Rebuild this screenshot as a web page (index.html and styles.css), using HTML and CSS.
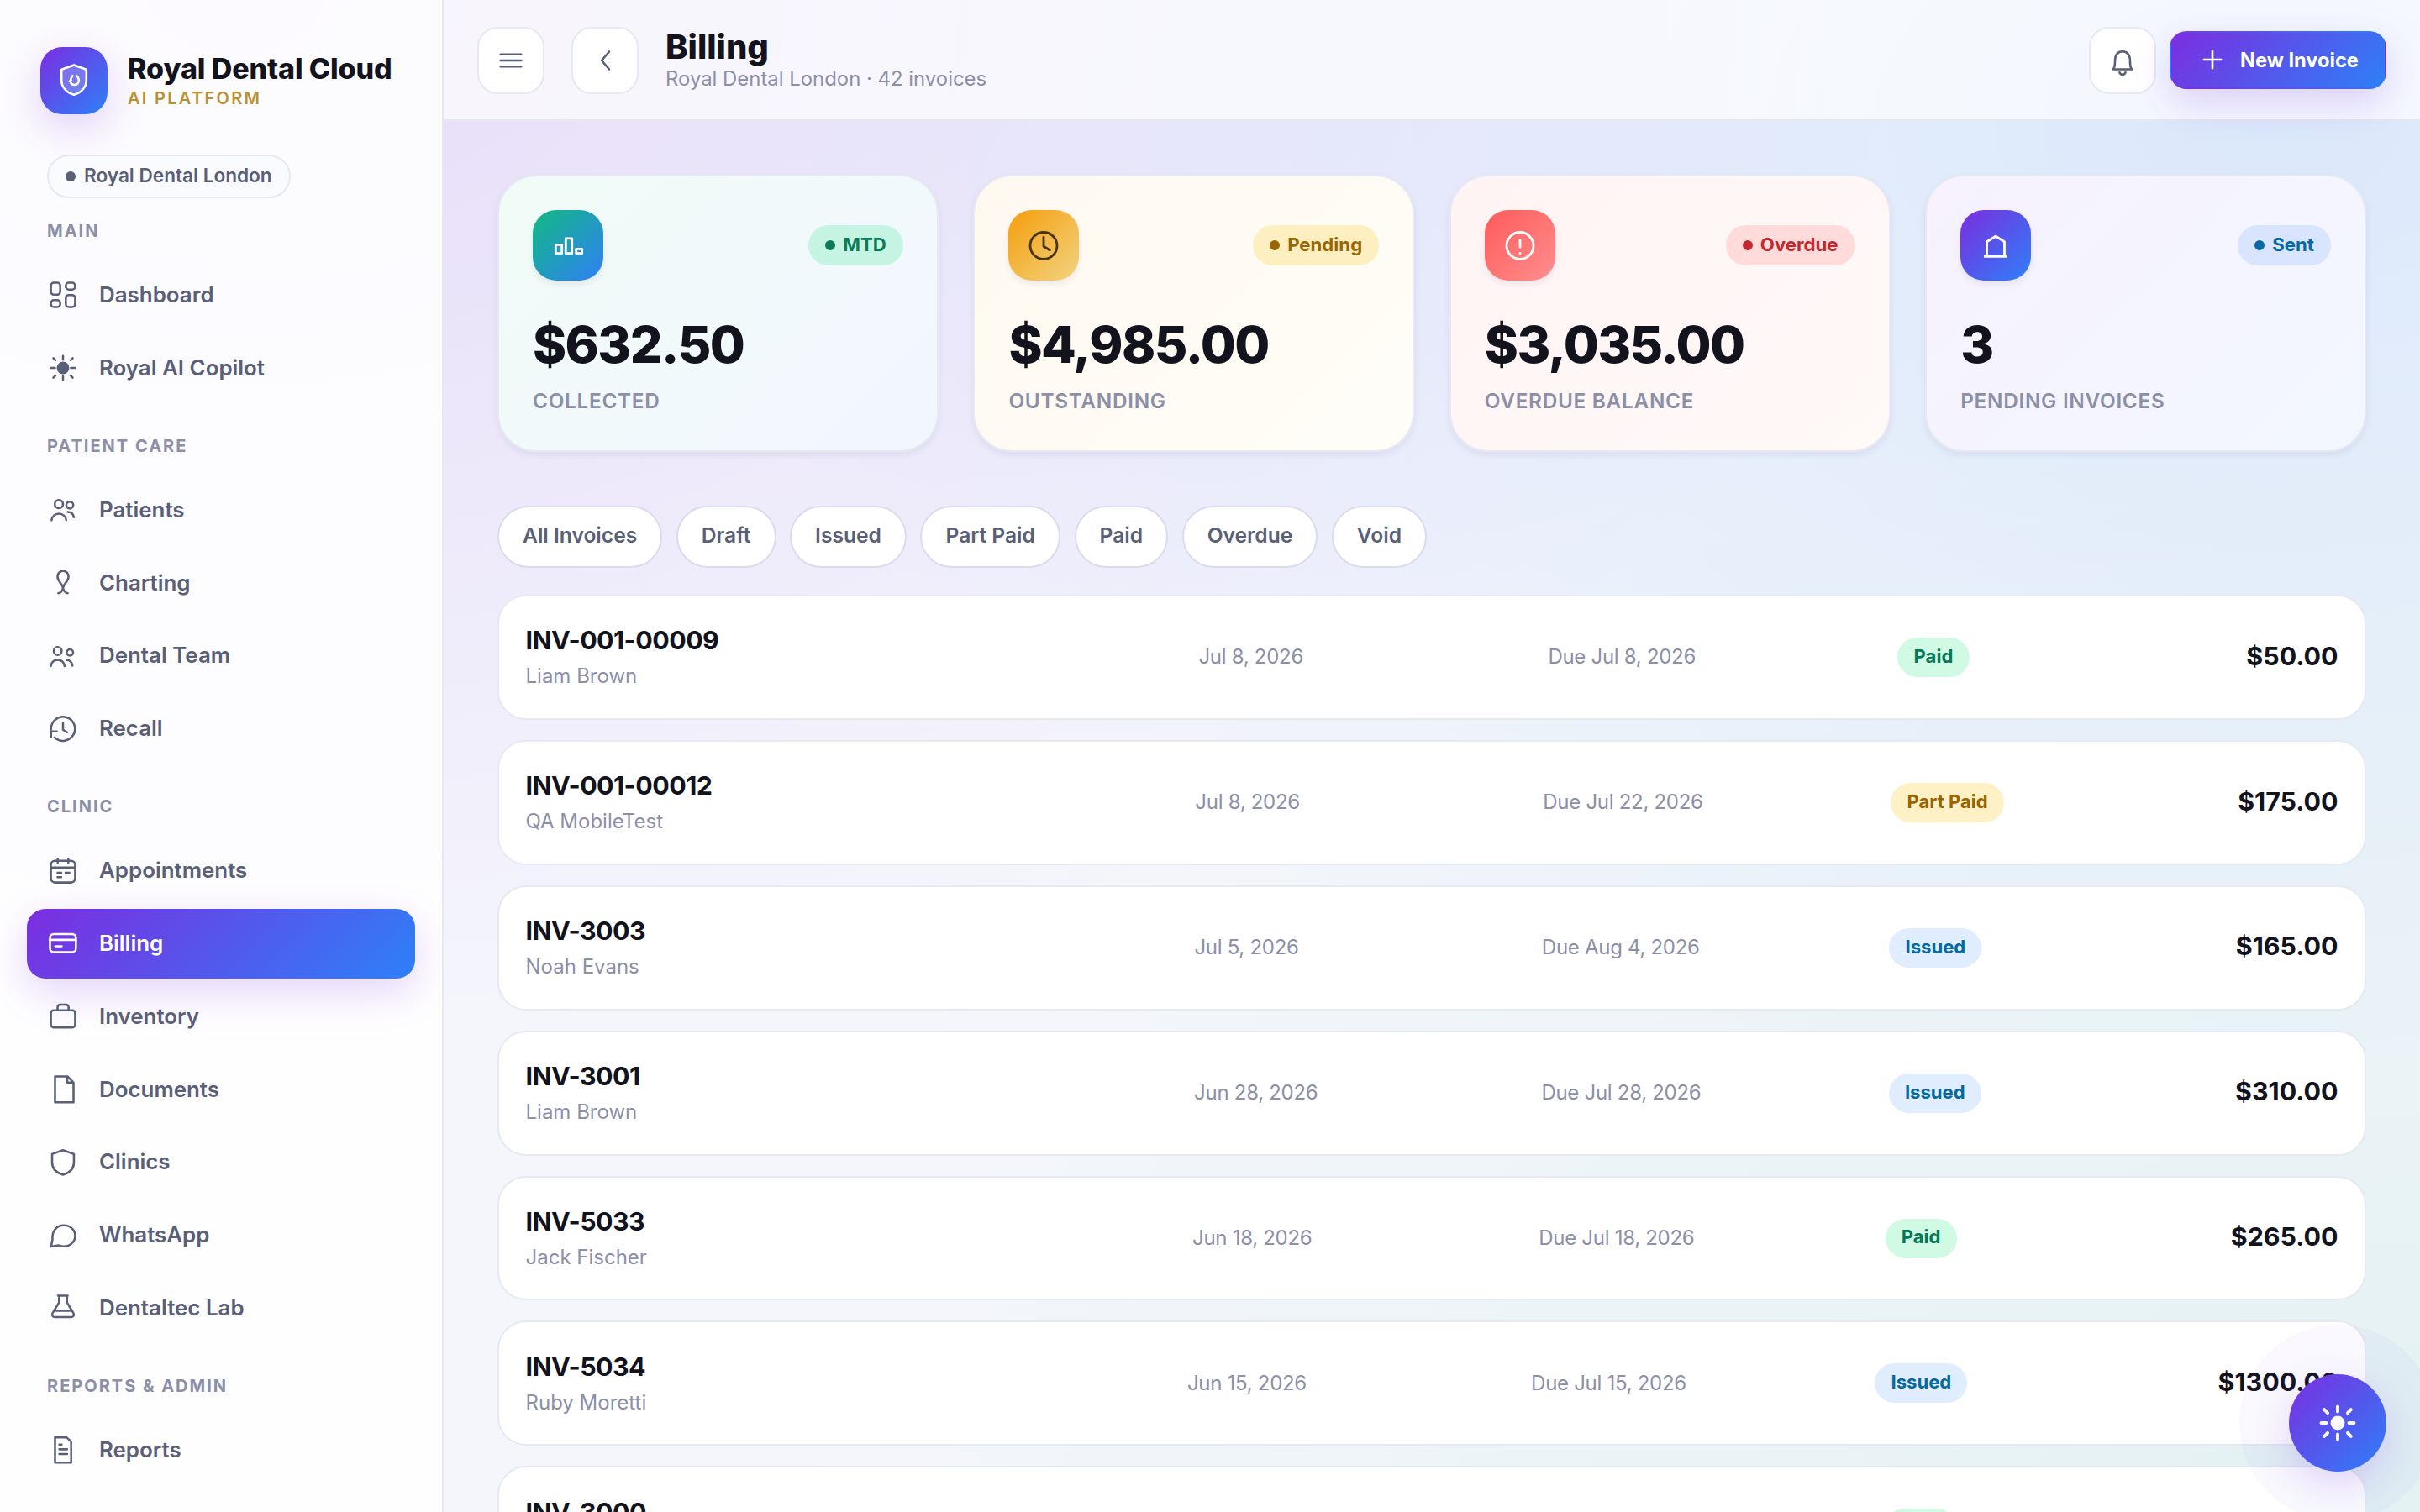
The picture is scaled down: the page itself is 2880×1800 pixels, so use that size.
FILE: index.html
```html
<!DOCTYPE html>
<html lang="en">
<head>
    <meta charset="UTF-8">
    <meta name="viewport" content="width=device-width, initial-scale=1.0">
    <title>Billing - Royal Dental Cloud</title>
    <link rel="stylesheet" href="styles.css">
</head>
<body>
    <div class="app">
        <aside class="sidebar">
            <div class="brand">
                <div class="brand-logo">
                    <svg width="40" height="40" viewBox="0 0 40 40"><path d="M20 1.6l14.8 5.2v12.4c0 8.4-5.6 14.8-14.8 17.6C10.800 34 5.200 27.600 5.200 19.200V6.800z" fill="rgba(255,255,255,.2)"/><path d="M18.300 14.200c-1.600 2-2.600 4-2.400 6.600.2 2.700 2.300 4.200 4.600 4.200 3 0 5.400-2.300 5.400-5.400 0-2.200-1-3.900-2.700-5.400M14.800 20.700l2-.8"/></svg>
                </div>
                <div class="brand-text">
                    <div class="brand-name">Royal Dental Cloud</div>
                    <div class="brand-tag">AI PLATFORM</div>
                </div>
            </div>
            <div class="clinic-pill"><span class="dot"></span><span class="lift">Royal Dental London</span></div>
            <nav class="nav">
                <div class="nav-label">MAIN</div>
                <a class="nav-item"><svg viewBox="0 0 24 24"><rect x="2.900" y="2.900" width="7" height="9" rx="2.200"/><rect x="14.100" y="2.900" width="7" height="5.100" rx="2.200"/><rect x="14.100" y="12.100" width="7" height="9" rx="2.200"/><rect x="2.900" y="16" width="7" height="5.100" rx="2.200"/></svg>Dashboard</a>
                <a class="nav-item"><svg viewBox="0 0 24 24"><circle cx="12" cy="12" r="3.900" class="solid"/><path d="M12 3v2.800M12 18.200V21M3 12h3M18 12h3M4.700 4.700l1.600 1.600M17.700 17.700l1.600 1.600M4.700 19.300l1.600-1.600M17.700 6.300l1.600-1.600"/></svg>Royal AI Copilot</a>

                <div class="nav-label">PATIENT CARE</div>
                <a class="nav-item"><svg viewBox="0 0 24 24"><circle cx="8.900" cy="7.700" r="3.100"/><circle cx="17.100" cy="8.400" r="2.600"/><path d="M3.400 19.800c.4-3 2.600-5 5.500-5s5.100 2 5.500 5M15.500 13.600c2.400 0 4.200 1.400 4.700 3.900"/></svg>Patients</a>
                <a class="nav-item"><svg viewBox="0 0 24 24"><path d="M12 2.900C9.500 3.400 7.900 5.200 7.900 7.400c0 1.700.9 2.900 1.900 4.200 1.200 1.500 2 2.700 2.200 4.400.2-1.700 1-2.900 2.200-4.400 1-1.300 1.900-2.500 1.900-4.200 0-2.200-1.600-4-4.100-4.500zM12 16c-.5 2.200-1.800 3.500-3.600 3.700M12 16c.5 2.200 1.800 3.500 3.600 3.700"/></svg>Charting</a>
                <a class="nav-item"><svg viewBox="0 0 24 24"><circle cx="8" cy="8.200" r="3"/><circle cx="17.200" cy="9.300" r="2.400"/><path d="M2.800 19.600c.4-2.900 2.400-4.800 5.200-4.800s4.800 1.900 5.200 4.800M14.800 15c2.200 0 3.900 1.600 4.300 4.300"/></svg>Dental Team</a>
                <a class="nav-item"><svg viewBox="0 0 24 24"><path d="M3 12.200a9 9 0 1 1 2.700 6M3 18v-4.300h4.300M12 7.600v4.900l3 1.900"/></svg>Recall</a>

                <div class="nav-label">CLINIC</div>
                <a class="nav-item"><svg viewBox="0 0 24 24"><rect x="2.900" y="4.300" width="18.200" height="16.300" rx="3"/><path d="M2.900 9.300h18.200M8 2.700v3M16 2.700v3M7.900 13.200h2.800M13.900 13.200h2.900M7.900 16.600h2.800"/></svg>Appointments</a>
                <a class="nav-item active"><svg viewBox="0 0 24 24"><rect x="2.200" y="5.100" width="19.500" height="13.500" rx="2.800"/><path d="M2.200 9.400h19.500M6.200 14.200h4.800"/></svg>Billing</a>
                <a class="nav-item"><svg viewBox="0 0 24 24"><rect x="2.900" y="7.400" width="18.200" height="12.900" rx="2"/><path d="M7.900 7.400V5.200a2 2 0 0 1 2-2h4.300a2 2 0 0 1 2 2v2.200"/></svg>Inventory</a>
                <a class="nav-item"><svg viewBox="0 0 24 24"><path d="M6 2.200h9.400l4.500 4.600v14.800H6zM15.200 2.200v4.600h4.700"/></svg>Documents</a>
                <a class="nav-item"><svg viewBox="0 0 24 24"><path d="M12 2.700l8.200 2.900v6.200c0 4.600-3.300 7.900-8.200 9.300-4.900-1.400-8.200-4.700-8.200-9.300V5.600z"/></svg>Clinics</a>
                <a class="nav-item"><svg viewBox="0 0 24 24"><path d="M3 20.200l1.100-5.300C3.500 8.500 7.300 4.300 12.600 4.300c4.900 0 8.500 3.300 8.500 7.800s-3.600 7.900-8.500 7.900c-1.600 0-2.800-.3-4-.8z"/></svg>WhatsApp</a>
                <a class="nav-item"><svg viewBox="0 0 24 24"><path d="M8.200 2.900h7.300M9 2.900V8l-4.800 7.900c-.9 1.600 0 3.100 1.800 3.100h12c1.800 0 2.700-1.500 1.800-3.100L15 8V2.900M7 14.200h10"/></svg>Dentaltec Lab</a>

                <div class="nav-label">REPORTS &amp; ADMIN</div>
                <a class="nav-item"><svg viewBox="0 0 24 24"><path d="M6 2.600h8.600l3.500 3.200v15.800H6zM9.200 8h1.800M9.200 11.600h5.900M9.200 15.100h5.900"/></svg>Reports</a>
            </nav>
        </aside>

        <main class="main">
            <header class="topbar">
                <button class="icon-btn"><svg width="40" height="40" viewBox="0 0 40 40"><path d="M7.700 12.700h24.600M7.700 20h24.600M7.700 27.300h24.600"/></svg></button>
                <button class="icon-btn"><svg width="40" height="40" viewBox="0 0 40 40"><path d="M25 9.500L16 20l9 10.500"/></svg></button>
                <div class="page-title">
                    <h1>Billing</h1>
                    <p>Royal Dental London · 42 invoices</p>
                </div>
                <div class="topbar-actions">
                    <button class="icon-btn"><svg width="40" height="40" viewBox="0 0 40 40"><path d="M8.800 30.500c2-2 2.200-4.500 2.200-9 0-8 3.200-12.200 9-12.200s9 4.200 9 12.200c0 4.500.2 7 2.200 9zM16.400 34.200c.7 1.700 1.900 2.600 3.600 2.600s2.900-.9 3.600-2.600"/></svg></button>
                    <button class="btn-primary"><svg width="26" height="26" viewBox="0 0 26 26"><path d="M13 2.800v20.400M2.800 13h20.400"/></svg>New Invoice</button>
                </div>
            </header>

            <section class="content">
                <div class="stats">
                    <div class="stat stat-green">
                        <div class="stat-top">
                            <div class="stat-icon"><svg width="40" height="40" viewBox="0 0 40 40"><rect x="5.300" y="19.300" width="7.400" height="10.400"/><rect x="17.300" y="11.800" width="7.400" height="17.900"/><rect x="29.700" y="24.300" width="7" height="5.400"/></svg></div>
                            <span class="stat-pill"><span class="dot"></span><span class="lift">MTD</span></span>
                        </div>
                        <div class="stat-value">$632.50</div>
                        <div class="stat-label">COLLECTED</div>
                    </div>
                    <div class="stat stat-amber">
                        <div class="stat-top">
                            <div class="stat-icon"><svg width="40" height="40" viewBox="0 0 40 40"><circle cx="20" cy="20.500" r="16"/><path d="M20 10.500v10.700l7.300 4.500"/></svg></div>
                            <span class="stat-pill"><span class="dot"></span><span class="lift">Pending</span></span>
                        </div>
                        <div class="stat-value">$4,985.00</div>
                        <div class="stat-label">OUTSTANDING</div>
                    </div>
                    <div class="stat stat-red">
                        <div class="stat-top">
                            <div class="stat-icon"><svg width="40" height="40" viewBox="0 0 40 40"><circle cx="20" cy="20.500" r="16"/><path d="M20 13.500v8.700M20 29.300v.4"/></svg></div>
                            <span class="stat-pill"><span class="dot"></span><span class="lift">Overdue</span></span>
                        </div>
                        <div class="stat-value">$3,035.00</div>
                        <div class="stat-label">OVERDUE BALANCE</div>
                    </div>
                    <div class="stat stat-purple">
                        <div class="stat-top">
                            <div class="stat-icon"><svg width="40" height="40" viewBox="0 0 40 40" class="square"><path d="M9.500 33V15.800L20 9.200l10.500 6.600V33M6 33.300h28"/></svg></div>
                            <span class="stat-pill"><span class="dot"></span><span class="lift">Sent</span></span>
                        </div>
                        <div class="stat-value">3</div>
                        <div class="stat-label">PENDING INVOICES</div>
                    </div>
                </div>

                <div class="filters">
                    <button class="chip">All Invoices</button>
                    <button class="chip">Draft</button>
                    <button class="chip">Issued</button>
                    <button class="chip">Part Paid</button>
                    <button class="chip">Paid</button>
                    <button class="chip">Overdue</button>
                    <button class="chip">Void</button>
                </div>

                <div class="invoices">
                    <div class="invoice">
                        <div><div class="inv-no">INV-001-00009</div><div class="inv-name">Liam Brown</div></div>
                        <div class="inv-date">Jul 8, 2026</div>
                        <div class="inv-date">Due Jul 8, 2026</div>
                        <div class="inv-status"><span class="badge paid">Paid</span></div>
                        <div class="inv-amount">$50.00</div>
                    </div>
                    <div class="invoice">
                        <div><div class="inv-no">INV-001-00012</div><div class="inv-name">QA MobileTest</div></div>
                        <div class="inv-date">Jul 8, 2026</div>
                        <div class="inv-date">Due Jul 22, 2026</div>
                        <div class="inv-status"><span class="badge part">Part Paid</span></div>
                        <div class="inv-amount">$175.00</div>
                    </div>
                    <div class="invoice">
                        <div><div class="inv-no">INV-3003</div><div class="inv-name">Noah Evans</div></div>
                        <div class="inv-date">Jul 5, 2026</div>
                        <div class="inv-date">Due Aug 4, 2026</div>
                        <div class="inv-status"><span class="badge issued">Issued</span></div>
                        <div class="inv-amount">$165.00</div>
                    </div>
                    <div class="invoice">
                        <div><div class="inv-no">INV-3001</div><div class="inv-name">Liam Brown</div></div>
                        <div class="inv-date">Jun 28, 2026</div>
                        <div class="inv-date">Due Jul 28, 2026</div>
                        <div class="inv-status"><span class="badge issued">Issued</span></div>
                        <div class="inv-amount">$310.00</div>
                    </div>
                    <div class="invoice">
                        <div><div class="inv-no">INV-5033</div><div class="inv-name">Jack Fischer</div></div>
                        <div class="inv-date">Jun 18, 2026</div>
                        <div class="inv-date">Due Jul 18, 2026</div>
                        <div class="inv-status"><span class="badge paid">Paid</span></div>
                        <div class="inv-amount">$265.00</div>
                    </div>
                    <div class="invoice">
                        <div><div class="inv-no">INV-5034</div><div class="inv-name">Ruby Moretti</div></div>
                        <div class="inv-date">Jun 15, 2026</div>
                        <div class="inv-date">Due Jul 15, 2026</div>
                        <div class="inv-status"><span class="badge issued">Issued</span></div>
                        <div class="inv-amount">$1300.00</div>
                    </div>
                    <div class="invoice">
                        <div><div class="inv-no">INV-3000</div><div class="inv-name">Noah Evans</div></div>
                        <div class="inv-date">Jun 12, 2026</div>
                        <div class="inv-date">Due Jul 12, 2026</div>
                        <div class="inv-status"><span class="badge paid">Paid</span></div>
                        <div class="inv-amount">$220.00</div>
                    </div>
                </div>
            </section>
        </main>
    </div>

    <button class="fab">
        <svg width="52" height="52" viewBox="0 0 24 24"><circle cx="12" cy="12" r="3.900"/><path d="M12 3v2.800M12 18.200V21M3 12h2.800M18.200 12H21M4.700 4.700l1.800 1.800M17.500 17.500l1.800 1.800M4.700 19.300l1.800-1.800M17.500 6.500l1.800-1.800"/></svg>
    </button>
</body>
</html>
```
FILE: styles.css
```css
:root {
    --ink: #12131c;
    --text: #5a5f78;
    --muted: #8b8fa8;
    --line: #e6e8f2;
    --brand: linear-gradient(135deg, #7c2de0, #2d80f8);
    --glow: 0 16px 48px rgba(124, 45, 224, 0.2);
}
* {
    box-sizing: border-box;
}
body {
    margin: 0;
    height: 100vh;
    overflow: hidden;
    font-family: 'Inter', sans-serif;
    line-height: 1.5;
    color: var(--ink);
    background:
        radial-gradient(ellipse 2000px 1250px at 280px 0, rgba(124, 45, 224, 0.13), transparent),
        radial-gradient(ellipse 1900px 1150px at 2700px 150px, rgba(30, 130, 240, 0.12), transparent),
        radial-gradient(ellipse 2000px 1400px at 2880px 1800px, rgba(16, 185, 129, 0.08), transparent),
        #f5f6fc;
}
button {
    font-family: inherit;
    cursor: pointer;
}
svg {
    flex: none;
    fill: none;
    stroke: currentColor;
    stroke-width: 2.6;
    stroke-linecap: round;
    stroke-linejoin: round;
}
.app {
    display: flex;
    height: 100vh;
    overflow: hidden;
}
.dot {
    width: 12px;
    height: 12px;
    border-radius: 50%;
    background: currentColor;
}
.lift {
    padding-bottom: 3px;
}

/* Sidebar */
.sidebar {
    width: 528px;
    flex: none;
    border-right: 2px solid var(--line);
    background: rgba(255, 255, 255, 0.86);
    overflow: hidden;
}
.brand {
    display: flex;
    align-items: center;
    gap: 24px;
    padding: 56px 40px 48px 48px;
}
.brand-logo {
    width: 80px;
    height: 80px;
    border-radius: 26px;
    display: flex;
    align-items: center;
    justify-content: center;
    color: #fff;
    background: var(--brand);
    box-shadow: var(--glow);
}
.brand-text {
    padding-top: 2px;
}
.brand-name {
    font-size: 34px;
    font-weight: 800;
    line-height: 1.2;
    letter-spacing: -0.003em;
    white-space: nowrap;
}
.brand-tag {
    font-size: 20px;
    font-weight: 600;
    line-height: 1.5;
    letter-spacing: 0.115em;
    color: #b8922e;
}
.clinic-pill {
    display: inline-flex;
    align-items: center;
    gap: 10px;
    height: 52px;
    margin-left: 56px;
    padding: 0 20px;
    border: 2px solid var(--line);
    border-radius: 26px;
    background: #fafbff;
    font-size: 22.6px;
    font-weight: 600;
    color: var(--text);
}
.nav {
    padding: 0 32px;
}
.nav-label {
    margin: 36.2px 0 20px;
    padding-left: 24px;
    font-size: 20px;
    font-weight: 700;
    line-height: 30px;
    letter-spacing: 0.1em;
    color: var(--muted);
}
.nav-label:first-child {
    margin-top: 24px;
}
.nav-item {
    display: flex;
    align-items: center;
    gap: 24px;
    margin-bottom: 4px;
    padding: 22px 24px;
    border-radius: 22px;
    font-size: 25.9px;
    font-weight: 600;
    line-height: 38.8px;
    color: var(--text);
}
.nav-item svg {
    width: 38px;
    height: 38px;
    stroke-width: 1.6;
}
.nav-item .solid {
    fill: currentColor;
}
.nav-item.active {
    color: #fff;
    background: var(--brand);
    box-shadow: var(--glow);
}

/* Top bar */
.main {
    flex: 1;
    min-width: 0;
}
.topbar {
    display: flex;
    align-items: center;
    gap: 32px;
    height: 144px;
    padding: 0 40px;
    border-bottom: 2px solid var(--line);
    background: rgba(255, 255, 255, 0.68);
}
.icon-btn {
    display: flex;
    align-items: center;
    justify-content: center;
    width: 80px;
    height: 80px;
    padding: 0;
    margin-top: 2px;
    border: 2px solid var(--line);
    border-radius: 24px;
    background: #fff;
    color: var(--text);
}
.page-title {
    padding-top: 1px;
}
.page-title h1 {
    margin: 0;
    font-size: 40px;
    font-weight: 800;
    line-height: 1.1;
    letter-spacing: 0;
}
.page-title p {
    margin: 0;
    font-size: 23.9px;
    line-height: 1.3;
    color: var(--muted);
}
.topbar-actions {
    display: flex;
    align-items: center;
    gap: 16px;
    margin-left: auto;
}
.btn-primary {
    display: flex;
    align-items: center;
    justify-content: center;
    gap: 20px;
    width: 258px;
    height: 69px;
    padding: 0 0 0 5px;
    border: 2px solid transparent;
    border-radius: 20px;
    background: var(--brand);
    box-shadow: var(--glow);
    color: #fff;
    font-size: 23.6px;
    font-weight: 700;
}

/* Stat cards */
.content {
    padding: 64px;
}
.stats {
    display: grid;
    grid-template-columns: repeat(4, 1fr);
    gap: 41.6px;
    margin-bottom: 64px;
}
.stat {
    height: 330px;
    padding: 40px;
    border: 2px solid var(--line);
    border-radius: 46px;
    box-shadow: 0 4px 8px rgba(30, 30, 80, 0.07);
}
.stat-top {
    display: flex;
    align-items: center;
    justify-content: space-between;
}
.stat-icon {
    display: flex;
    align-items: center;
    justify-content: center;
    width: 84px;
    height: 84px;
    border-radius: 28px;
    color: #fff;
    box-shadow: 0 4px 8px rgba(30, 30, 80, 0.08);
}
.stat-icon svg {
    stroke-width: 2.8;
}
.stat-icon .square {
    stroke-linecap: butt;
    stroke-linejoin: miter;
}
.stat-pill {
    display: inline-flex;
    align-items: center;
    gap: 9px;
    height: 48px;
    padding: 0 20px;
    border-radius: 24px;
    font-size: 22.2px;
    font-weight: 700;
}
.stat-value {
    margin-top: 43px;
    font-size: 60.8px;
    font-weight: 800;
    line-height: 67px;
    letter-spacing: -0.025em;
}
.stat-label {
    margin-top: 15px;
    font-size: 24.3px;
    font-weight: 600;
    line-height: 36px;
    letter-spacing: 0.03em;
    color: var(--muted);
}
.stat-green {
    background: linear-gradient(135deg, #f1fcf7, #f2f6ff);
}
.stat-green .stat-icon {
    background: linear-gradient(135deg, #12b981, #2f80f7);
}
.stat-green .stat-pill {
    background: #c6f4e2;
    color: #0a7a58;
}
.stat-amber {
    background: linear-gradient(135deg, #fff9f0, #fffdf8);
}
.stat-amber .stat-icon {
    background: linear-gradient(135deg, #f59e0b, #f1d382);
    color: #4a3405;
}
.stat-amber .stat-pill {
    background: #fdefc0;
    color: #9a6505;
}
.stat-red {
    background: linear-gradient(135deg, #fff4f4, #fff9f8);
}
.stat-red .stat-icon {
    background: linear-gradient(135deg, #ff5a5a, #ff8e8e);
}
.stat-red .stat-pill {
    background: #ffdcdb;
    color: #c2282f;
}
.stat-purple {
    background: linear-gradient(135deg, #f7f2fd, #f2f7ff);
}
.stat-purple .stat-icon {
    background: var(--brand);
}
.stat-purple .stat-pill {
    background: #d9e5fe;
    color: #0668a5;
}

/* Filters */
.filters {
    display: flex;
    gap: 16.6px;
    margin-bottom: 32px;
}
.chip {
    height: 74px;
    padding: 0 28px 4px;
    border: 2px solid #dadcee;
    border-radius: 37px;
    background: #fff;
    color: var(--text);
    font-size: 24.6px;
    font-weight: 600;
}

/* Invoice rows */
.invoices {
    display: flex;
    flex-direction: column;
    gap: 24px;
}
.invoice {
    display: grid;
    grid-template-columns: 2fr 1fr 1fr 1fr auto;
    align-items: center;
    gap: 32px;
    flex: none;
    height: 148.9px;
    padding: 0 31.5px;
    border: 2px solid var(--line);
    border-radius: 34px;
    background: #fff;
}
.inv-no {
    font-size: 30.4px;
    font-weight: 700;
    line-height: 45px;
    letter-spacing: -0.018em;
}
.inv-name {
    font-size: 24px;
    line-height: 39px;
    color: var(--muted);
}
.inv-date {
    padding-left: 1px;
    font-size: 24px;
    letter-spacing: -0.012em;
    color: var(--muted);
}
.inv-status {
    display: flex;
    padding-left: 1px;
}
.inv-amount {
    padding-bottom: 2px;
    font-size: 30.4px;
    font-weight: 700;
}
.badge {
    display: inline-flex;
    align-items: center;
    height: 47px;
    padding: 0 19.2px 2px;
    border-radius: 24px;
    font-size: 22.1px;
    font-weight: 700;
}
.badge.paid {
    background: #d1fae5;
    color: #047857;
}
.badge.part {
    background: #fef1c5;
    color: #9a6300;
}
.badge.issued {
    background: #e0edff;
    color: #0369a1;
}

/* Floating assistant button */
.fab {
    position: fixed;
    right: 40px;
    bottom: 48px;
    display: flex;
    align-items: center;
    justify-content: center;
    width: 116px;
    height: 116px;
    padding: 0;
    border: none;
    border-radius: 50%;
    background: var(--brand);
    box-shadow: var(--glow);
    color: #fff;
}
.fab::before {
    content: "";
    position: absolute;
    inset: -59px;
    border-radius: 50%;
    background: var(--brand);
    opacity: 0.035;
}
.fab svg {
    stroke-width: 1.8;
}
.fab circle {
    fill: currentColor;
    stroke: none;
}
```
